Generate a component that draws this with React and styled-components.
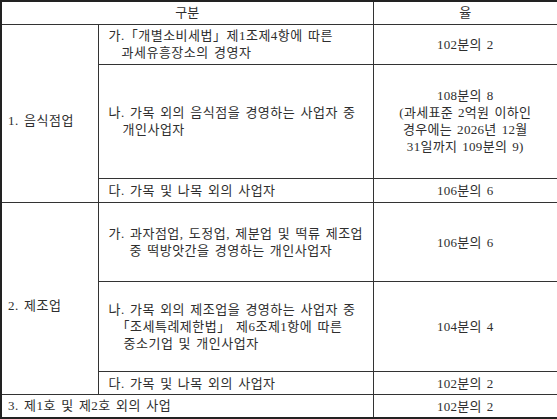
import React from "react";
import styled, { createGlobalStyle } from "styled-components";

const Global = createGlobalStyle`
  html, body { margin: 0; padding: 0; background: #fff; }
  body {
    font-family: "Liberation Serif", "Noto Sans CJK KR", serif;
    font-size: 13px;
    color: #2e2e2e;
  }
`;

const Table = styled.table`
  width: 557px;
  height: 419px;
  border-collapse: collapse;
  table-layout: fixed;
  border: 2px solid #222;
`;

const HeadCell = styled.th`
  font-weight: normal;
  text-align: center;
  vertical-align: middle;
  border: 1px solid #333;
  padding: 0;
  line-height: 16px;
`;

const Row = styled.tr`
  height: ${(p) => p.$h}px;
`;

const GroupCell = styled.td`
  border: 1px solid #333;
  vertical-align: middle;
  padding: ${(p) => p.$pt || 0}px 0 0 6px;
  line-height: 16px;
  letter-spacing: 0.5px;
  word-spacing: 1.5px;
`;

const DescCell = styled.td`
  border: 1px solid #333;
  vertical-align: middle;
  padding: 0 0 0 10px;
  line-height: 17px;
  letter-spacing: 0.5px;
  word-spacing: 1.5px;
`;

const RateCell = styled.td`
  border: 1px solid #333;
  vertical-align: middle;
  text-align: center;
  padding: 0;
  line-height: 17px;
  letter-spacing: 0.3px;
  word-spacing: 1.5px;
`;

const Line = styled.div`
  padding-left: ${(p) => p.$indent || 0}px;
  white-space: nowrap;
`;

const Desc = ({ lines }) => (
  <DescCell>
    {lines.map(([t, ind], i) => (
      <Line key={i} $indent={ind}>
        {t}
      </Line>
    ))}
  </DescCell>
);

const Rate = ({ lines }) => (
  <RateCell>
    {lines.map((t, i) => (
      <Line key={i}>{t}</Line>
    ))}
  </RateCell>
);

export default function App() {
  return (
    <>
      <Global />
      <Table>
        <colgroup>
          <col style={{ width: 97 }} />
          <col style={{ width: 275 }} />
          <col style={{ width: 185 }} />
        </colgroup>
        <tbody>
          <Row $h={23}>
            <HeadCell colSpan={2}>구분</HeadCell>
            <HeadCell>율</HeadCell>
          </Row>
          <Row $h={40}>
            <GroupCell rowSpan={3} $pt={16}>1. 음식점업</GroupCell>
            <Desc
              lines={[
                ["가.「개별소비세법」제1조제4항에 따른", 0],
                ["과세유흥장소의 경영자", 13],
              ]}
            />
            <Rate lines={["102분의 2"]} />
          </Row>
          <Row $h={114}>
            <Desc
              lines={[
                ["나. 가목 외의 음식점을 경영하는 사업자 중", 0],
                ["개인사업자", 14],
              ]}
            />
            <Rate
              lines={[
                "108분의 8",
                "(과세표준 2억원 이하인",
                "경우에는 2026년 12월",
                "31일까지 109분의 9)",
              ]}
            />
          </Row>
          <Row $h={24}>
            <Desc lines={[["다. 가목 및 나목 외의 사업자", 0]]} />
            <Rate lines={["106분의 6"]} />
          </Row>
          <Row $h={79}>
            <GroupCell rowSpan={3} $pt={14}>2. 제조업</GroupCell>
            <Desc
              lines={[
                ["가. 과자점업, 도정업, 제분업 및 떡류 제조업", 0],
                ["중 떡방앗간을 경영하는 개인사업자", 21],
              ]}
            />
            <Rate lines={["106분의 6"]} />
          </Row>
          <Row $h={90}>
            <Desc
              lines={[
                ["나. 가목 외의 제조업을 경영하는 사업자 중", 0],
                ["「조세특례제한법」 제6조제1항에 따른", 8],
                ["중소기업 및 개인사업자", 15],
              ]}
            />
            <Rate lines={["104분의 4"]} />
          </Row>
          <Row $h={23}>
            <Desc lines={[["다. 가목 및 나목 외의 사업자", 0]]} />
            <Rate lines={["102분의 2"]} />
          </Row>
          <Row $h={23}>
            <GroupCell colSpan={2}>3. 제1호 및 제2호 외의 사업</GroupCell>
            <Rate lines={["102분의 2"]} />
          </Row>
        </tbody>
      </Table>
    </>
  );
}
